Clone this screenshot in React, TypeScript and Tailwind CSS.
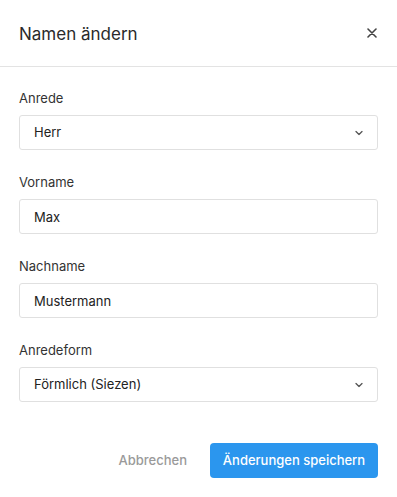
import React, { useState } from 'react';

const Chevron = () => (
    <svg width="8" height="5" viewBox="0 0 8 5" fill="none" className="absolute right-[15px] top-1/2 -translate-y-1/2 pointer-events-none">
        <path d="M1 1 L4 4 L7 1" stroke="#555" strokeWidth="1.3" strokeLinecap="round" strokeLinejoin="round"/>
    </svg>
);

const Field: React.FC<{ label: string; children: React.ReactNode }> = ({ label, children }) => (
    <div className="flex flex-col">
        <label className="text-[13px] leading-4 text-[#333] mb-[9px]">{label}</label>
        {children}
    </div>
);

const boxClass = "w-full h-[35px] px-[14px] rounded-[3px] border border-[#e0e0e0] bg-white text-[13px] text-[#222] outline-none";

export default function App() {
    const [anrede, setAnrede] = useState('Herr');
    const [vorname, setVorname] = useState('Max');
    const [nachname, setNachname] = useState('Mustermann');
    const [form, setForm] = useState('Förmlich (Siezen)');

    return (
        <div className="w-[397px] h-[497px] bg-white flex flex-col" style={{ fontFamily: 'Inter, "Noto Sans", sans-serif' }}>
            <div className="h-[67px] flex items-center justify-between pl-[19px] pr-[20px] border-b border-[#e3e3e3]">
                <h2 className="text-[17px] leading-6 text-[#2a2a2a] mt-[1px]">Namen ändern</h2>
                <button className="text-[#444]">
                    <svg width="10" height="10" viewBox="0 0 10 10">
                        <path d="M1 1 L9 9 M9 1 L1 9" stroke="#444" strokeWidth="1.6" strokeLinecap="round"/>
                    </svg>
                </button>
            </div>
            <div className="flex flex-col gap-[24px] px-[19px] pt-[23px]">
                <Field label="Anrede">
                    <div className="relative">
                        <select value={anrede} onChange={e => setAnrede(e.target.value)} className={`${boxClass} appearance-none`}>
                            <option>Herr</option>
                            <option>Frau</option>
                        </select>
                        <Chevron/>
                    </div>
                </Field>
                <Field label="Vorname">
                    <input value={vorname} onChange={e => setVorname(e.target.value)} className={boxClass}/>
                </Field>
                <Field label="Nachname">
                    <input value={nachname} onChange={e => setNachname(e.target.value)} className={boxClass}/>
                </Field>
                <Field label="Anredeform">
                    <div className="relative">
                        <select value={form} onChange={e => setForm(e.target.value)} className={`${boxClass} appearance-none`}>
                            <option>Förmlich (Siezen)</option>
                            <option>Informell (Duzen)</option>
                        </select>
                        <Chevron/>
                    </div>
                </Field>
            </div>
            <div className="flex justify-end items-center gap-[23px] px-[19px] mt-[41px]">
                <button className="text-[13px] text-[#9a9a9a] font-medium">Abbrechen</button>
                <button className="h-[35px] w-[168px] rounded-[4px] bg-[#2b96ee] text-white text-[13px] font-medium">Änderungen speichern</button>
            </div>
        </div>
    );
}
